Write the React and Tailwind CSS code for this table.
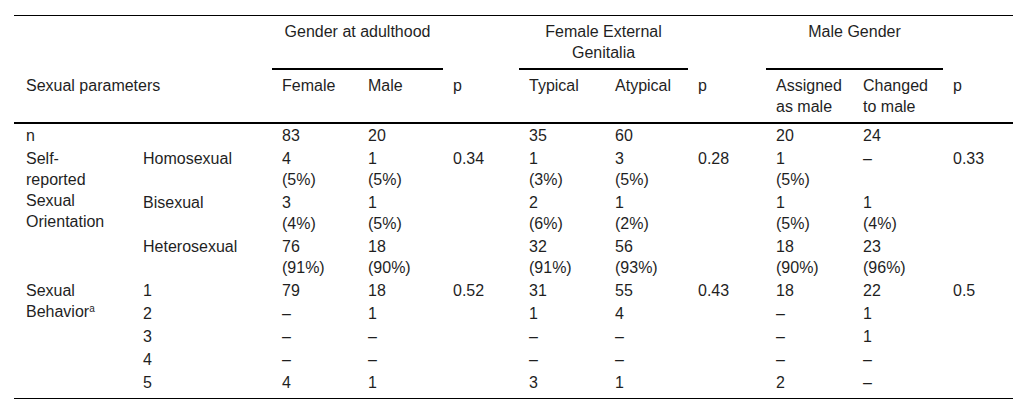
const groups = [
  { label: "Gender at adulthood", left: ["Female", "Male"] },
  { label: ["Female External", "Genitalia"], left: ["Typical", "Atypical"] },
  { label: "Male Gender", left: [["Assigned", "as male"], ["Changed", "to male"]] },
];

// each row: 9 values (3 groups x [a, b, p])
const orientation = [
  ["Homosexual", [["4", "(5%)"], ["1", "(5%)"], "0.34", ["1", "(3%)"], ["3", "(5%)"], "0.28", ["1", "(5%)"], "–", "0.33"]],
  ["Bisexual", [["3", "(4%)"], ["1", "(5%)"], "", ["2", "(6%)"], ["1", "(2%)"], "", ["1", "(5%)"], ["1", "(4%)"], ""]],
  ["Heterosexual", [["76", "(91%)"], ["18", "(90%)"], "", ["32", "(91%)"], ["56", "(93%)"], "", ["18", "(90%)"], ["23", "(96%)"], ""]],
];

const behavior = [
  ["1", ["79", "18", "0.52", "31", "55", "0.43", "18", "22", "0.5"]],
  ["2", ["–", "1", "", "1", "4", "", "–", "1", ""]],
  ["3", ["–", "–", "", "–", "–", "", "–", "1", ""]],
  ["4", ["–", "–", "", "–", "–", "", "–", "–", ""]],
  ["5", ["4", "1", "", "3", "1", "", "2", "–", ""]],
];

const widths = [
  "w-[119px]", "w-[139px]", "w-[86px]", "w-[85px]", "w-[76px]", "w-[86px]",
  "w-[83px]", "w-[78px]", "w-[87px]", "w-[90px]", "w-[70px]",
];

const Lines = ({ v }) =>
  Array.isArray(v) ? (
    v.map((l, i) => <div key={i}>{l}</div>)
  ) : (
    v
  );

const td = "px-[10px] py-px align-top";

function BodyRow({ label, values, first, last }) {
  const b = last ? " pb-[5px] border-b border-black" : "";
  return (
    <tr>
      {first}
      <td className={td + b}>{label}</td>
      {values.map((v, i) => (
        <td key={i} className={td + b}>
          <Lines v={v} />
        </td>
      ))}
    </tr>
  );
}

export default function App() {
  return (
    <div className="min-h-screen bg-white pt-[15px] pl-[14px] font-['Liberation_Sans',Arial,sans-serif] text-[16px] leading-[21px] text-[#1f1f1f]">
      <table className="w-[999px] table-fixed border-separate border-spacing-0 text-left">
        <colgroup>
          {widths.map((w, i) => (
            <col key={i} className={w} />
          ))}
        </colgroup>
        <thead>
          <tr>
            <th colSpan={2} className="border-t border-black py-[5px] font-normal" />
            {groups.map((g, i) => (
              <Group key={i} g={g} last={i === groups.length - 1} />
            ))}
          </tr>
          <tr>
            <th colSpan={2} className="border-b-2 border-black py-[5px] pl-3 align-top font-normal">
              Sexual parameters
            </th>
            {groups.map((g, i) => (
              <SubHeads key={i} g={g} />
            ))}
          </tr>
        </thead>
        <tbody>
          <tr>
            <td className={td + " pl-3"}>n</td>
            <td className={td} />
            {["83", "20", "", "35", "60", "", "20", "24", ""].map((v, i) => (
              <td key={i} className={td}>
                {v}
              </td>
            ))}
          </tr>
          {orientation.map(([label, values], i) => (
            <BodyRow
              key={label}
              label={label}
              values={values}
              first={
                i === 0 ? (
                  <td rowSpan={3} className={td + " pl-3"}>
                    <div>Self-</div>
                    <div>reported</div>
                    <div>Sexual</div>
                    <div>Orientation</div>
                  </td>
                ) : null
              }
            />
          ))}
          {behavior.map(([label, values], i) => (
            <BodyRow
              key={label}
              label={label}
              values={values}
              last={i === behavior.length - 1}
              first={
                i === 0 ? (
                  <td rowSpan={5} className={td + " pl-3 border-b border-black"}>
                    <div>Sexual</div>
                    <div>
                      Behavior<sup className="text-[10px] leading-none">a</sup>
                    </div>
                  </td>
                ) : null
              }
            />
          ))}
        </tbody>
      </table>
    </div>
  );
}

function Group({ g }) {
  return (
    <>
      <th colSpan={2} className="border-t border-b-2 border-black py-[5px] text-center align-top font-normal">
        <Lines v={g.label} />
      </th>
      <th className="border-t border-black py-[5px] font-normal" />
    </>
  );
}

function SubHeads({ g }) {
  return (
    <>
      {g.left.map((s, i) => (
        <th key={i} className="border-b-2 border-black px-[10px] py-[5px] align-top font-normal">
          <Lines v={s} />
        </th>
      ))}
      <th className="border-b-2 border-black px-[10px] py-[5px] align-top font-normal">p</th>
    </>
  );
}
